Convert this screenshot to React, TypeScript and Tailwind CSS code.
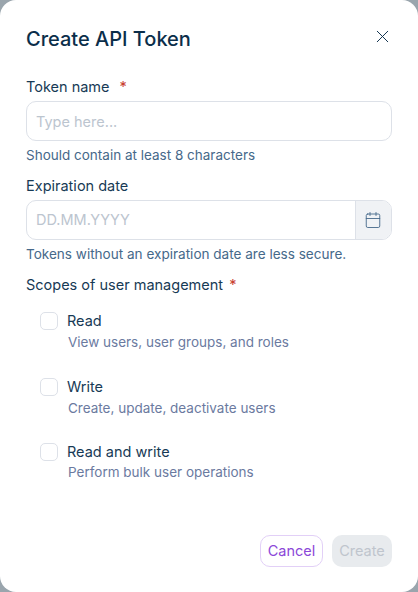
import { X, Calendar } from 'lucide-react';

const scopes = [
  { name: 'Read', hint: 'View users, user groups, and roles', box: 'mt-[16px]', gap: 'mt-[1px]' },
  { name: 'Write', hint: 'Create, update, deactivate users', box: 'mt-[25px]', gap: 'mt-[1px]' },
  { name: 'Read and write', hint: 'Perform bulk user operations', box: 'mt-[24px]', gap: 'mt-0' },
];

export default function App() {
  return (
    <div className="h-[592px] w-[418px] bg-[#9aa5ad] font-['Inter',sans-serif]">
      <div className="flex h-full flex-col rounded-[16px] bg-white px-[26px] pt-[26px] pb-[25px]">
        <div className="flex h-[26px] items-start justify-between">
          <h1 className="text-[20px] leading-[26px] font-medium text-[#0b2e4a]">Create API Token</h1>
          <button className="mr-[-1px] text-[#0b2e4a]">
            <X size={21} strokeWidth={1.1} />
          </button>
        </div>

        <label className="mt-[12px] block pt-[13px] text-[14.5px] leading-[20px] text-[#173a55]">
          Token name <span className="ml-[6px] text-[#c8402f]">*</span>
        </label>
        <input
          placeholder="Type here..."
          className="mt-[4px] h-[40px] w-full rounded-[10px] border border-[#dde1e8] px-[9px] text-[14.5px] outline-none placeholder:text-[#bcc5cf]"
        />
        <p className="mt-[4px] text-[13.5px] leading-[20px] text-[#46698a]">Should contain at least 8 characters</p>

        <label className="mt-[11px] block text-[14.5px] leading-[20px] text-[#173a55]">Expiration date</label>
        <div className="mt-[4px] flex h-[40px] overflow-hidden rounded-[10px] border border-[#dde1e8]">
          <input
            placeholder="DD.MM.YYYY"
            className="w-full min-w-0 flex-1 px-[9px] text-[14.5px] outline-none placeholder:text-[#bcc5cf]"
          />
          <div className="flex w-[36px] items-center justify-center border-l border-[#dde1e8] bg-[#f0f2f5] pr-[2px] text-[#46698a]">
            <Calendar size={18} strokeWidth={1.2} />
          </div>
        </div>
        <p className="mt-[4px] text-[13.55px] leading-[20px] text-[#46698a]">Tokens without an expiration date are less secure.</p>

        <label className="mt-[11px] block text-[14.5px] leading-[20px] text-[#173a55]">
          Scopes of user management <span className="ml-[2px] text-[#c8402f]">*</span>
        </label>

        {scopes.map((s) => (
          <div key={s.name} className={`${s.box} flex pl-[14px]`}>
            <span className="mt-[1px] h-[18px] w-[18px] shrink-0 rounded-[5px] border border-[#dde1e8] bg-white" />
            <div className="ml-[9px]">
              <div className="text-[14.5px] leading-[20px] text-[#173a55]">{s.name}</div>
              <div className={`${s.gap} ml-[1px] text-[13.5px] leading-[20px] text-[#6b7a9f]`}>{s.hint}</div>
            </div>
          </div>
        ))}

        <div className="mt-auto flex justify-end gap-[9px]">
          <button className="h-[32px] w-[63px] rounded-[10px] border border-[#e2d0f7] bg-white text-[14.5px] text-[#8b47d8]">
            Cancel
          </button>
          <button className="h-[32px] w-[60px] rounded-[10px] bg-[#e8ebee] text-[14.5px] text-[#bfc5cd]">
            Create
          </button>
        </div>
      </div>
    </div>
  );
}
